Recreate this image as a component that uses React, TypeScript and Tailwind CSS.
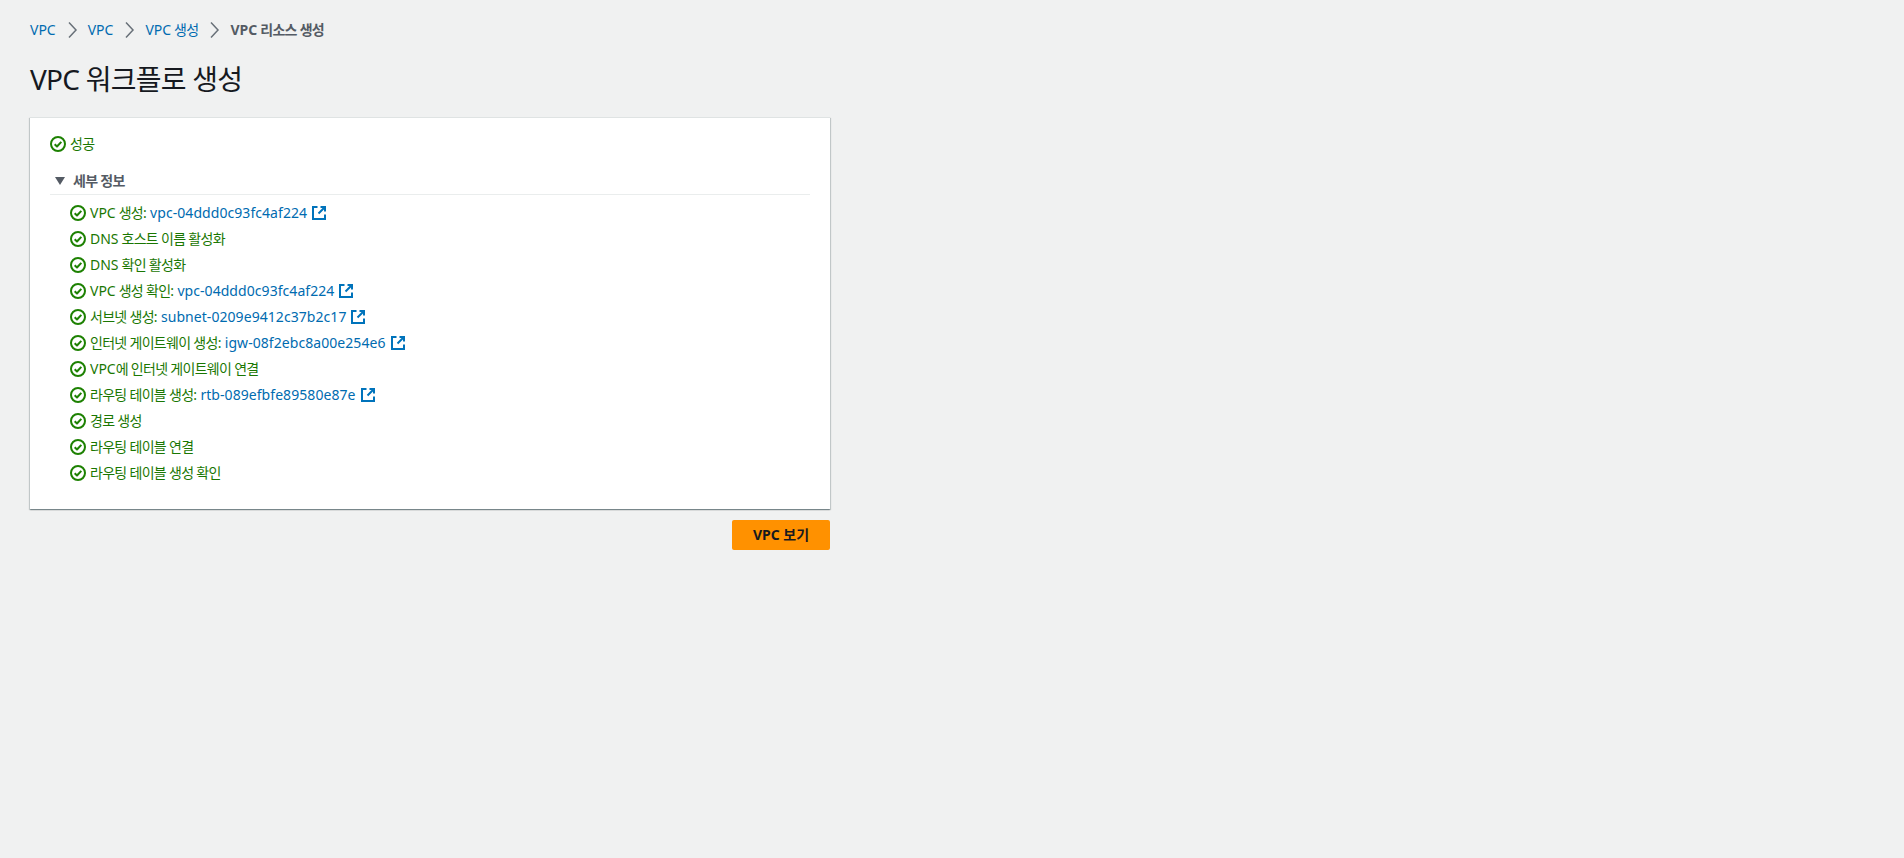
import React from 'react';

const CheckIcon = () => (
  <svg width="16" height="16" viewBox="0 0 16 16" fill="none" stroke="#1d8102" strokeWidth="2" className="shrink-0">
    <circle cx="8" cy="8" r="7" />
    <path d="M4.7 8.2 7 10.5l4.3-4.6" strokeLinejoin="round" />
  </svg>
);

const ExternalIcon = () => (
  <svg width="16" height="16" viewBox="0 0 16 16" fill="none" stroke="#0073bb" strokeWidth="2" className="ml-1 shrink-0">
    <path d="M6.5 2H2v12h12V9.5" />
    <path d="M9.5 2H14v4.5M14 2 7.5 8.5" />
  </svg>
);

const Chevron = () => (
  <svg width="32" height="20" viewBox="0 0 32 20" fill="none" stroke="#687078" strokeWidth="1.5" className="shrink-0">
    <path d="M13 2.5 20 10l-7 7.5" />
  </svg>
);

// 한글 글자폭이 원본보다 넓어서 한글 부분만 자간을 줄인다
const Label = ({ text }: { text: string }) => (
  <span>
    {text.split(/(VPC|DNS)/).map((part, i) =>
      part === 'VPC' || part === 'DNS' ? (
        <span key={i}>{part}</span>
      ) : (
        <span key={i} className="tracking-[-0.7px]">
          {part}
        </span>
      ),
    )}
  </span>
);

const steps: { label: string; id?: string }[] = [
  { label: 'VPC 생성:', id: 'vpc-04ddd0c93fc4af224' },
  { label: 'DNS 호스트 이름 활성화' },
  { label: 'DNS 확인 활성화' },
  { label: 'VPC 생성 확인:', id: 'vpc-04ddd0c93fc4af224' },
  { label: '서브넷 생성:', id: 'subnet-0209e9412c37b2c17' },
  { label: '인터넷 게이트웨이 생성:', id: 'igw-08f2ebc8a00e254e6' },
  { label: 'VPC에 인터넷 게이트웨이 연결' },
  { label: '라우팅 테이블 생성:', id: 'rtb-089efbfe89580e87e' },
  { label: '경로 생성' },
  { label: '라우팅 테이블 연결' },
  { label: '라우팅 테이블 생성 확인' },
];

const crumbs = ['VPC', 'VPC', 'VPC 생성'];

export default function App() {
  return (
    <div className="min-h-[858px] bg-[#f0f1f1] pl-[30px] pt-[20px] text-sm text-[#16191f] font-['Noto_Sans','Noto_Sans_CJK_KR',sans-serif]">
      <div className="w-[800px]">
        {/* breadcrumbs */}
        <nav className="flex h-5 items-center">
          {crumbs.map((c, i) => (
            <React.Fragment key={i}>
              <a className="text-[#006bb0]">
                <Label text={c} />
              </a>
              <Chevron />
            </React.Fragment>
          ))}
          <span className="font-bold text-[#545b64]">
            <Label text="VPC 리소스 생성" />
          </span>
        </nav>

        <h1 className="mt-[21px] text-[28px] leading-[36px] font-normal tracking-[-0.75px]">VPC 워크플로 생성</h1>

        {/* result card */}
        <section className="mt-[20px] h-[392px] bg-white px-5 pt-[16px] border-t border-[#dfe3e3] shadow-[0_1px_1px_0_rgba(0,28,36,0.3),1px_1px_1px_0_rgba(0,28,36,0.15),-1px_1px_1px_0_rgba(0,28,36,0.15)]">
          <div className="flex h-5 items-center gap-[4px] text-[#1a7702]">
            <CheckIcon />
            <Label text="성공" />
          </div>

          <div className="mt-[17px] flex h-5 items-center">
            <svg width="10" height="8" viewBox="0 0 10 8" className="ml-[5px] mr-[8px] text-[#545b64]" fill="currentColor">
              <path d="M0 0h10L5 8z" />
            </svg>
            <span className="font-bold text-[#545b64]">
              <Label text="세부 정보" />
            </span>
          </div>
          <div className="mt-[3px] border-t border-[#eaeded]" />

          <ul className="mt-[8px] flex flex-col gap-[6px] pl-5">
            {steps.map((s, i) => (
              <li key={i} className="flex h-5 items-center gap-[4px] text-[#1a7702]">
                <CheckIcon />
                <Label text={s.label} />
                {s.id && (
                  <a className="flex items-center tracking-[0.06px] text-[#006bb0]">
                    {s.id}
                    <ExternalIcon />
                  </a>
                )}
              </li>
            ))}
          </ul>
        </section>

        <div className="mt-[11px] flex justify-end">
          <button className="h-[30px] w-[98px] rounded-[2px] bg-[#ff9100] font-bold text-[#16191f]">VPC 보기</button>
        </div>
      </div>
    </div>
  );
}
